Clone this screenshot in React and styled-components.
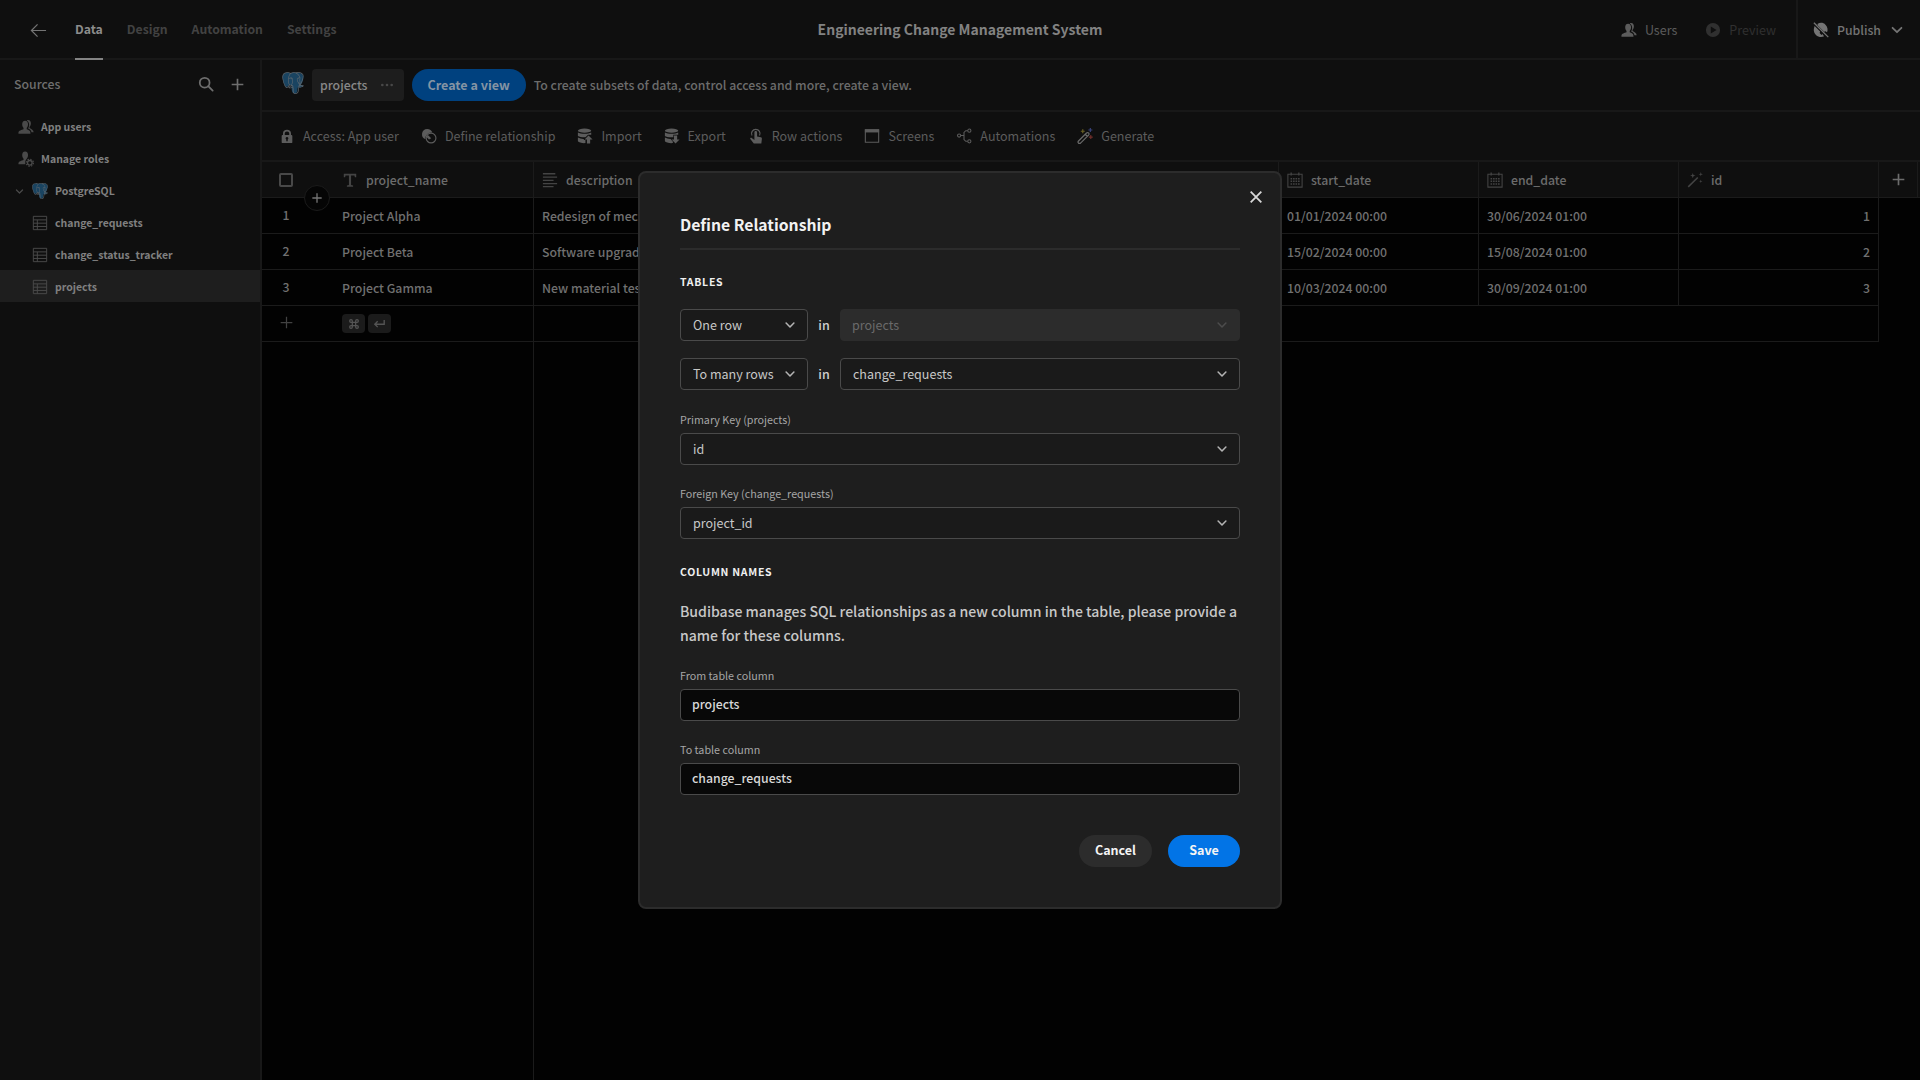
import React from "react";
import styled, { createGlobalStyle, css } from "styled-components";
import { SiPostgresql } from "react-icons/si";

const GlobalStyle = createGlobalStyle`
  * {
    box-sizing: border-box;
  }

  body {
    margin: 0;
    background: #020202;
    color: #747474;
    font-family: "Source Sans Pro", "Noto Sans CJK SC", sans-serif;
    font-size: 14px;
    font-size-adjust: 0.486;
    line-height: 20px;
  }

  button, input, select {
    margin: 0;
    font: inherit;
    font-size-adjust: inherit;
    color: inherit;
  }

  button {
    padding: 0;
    border: 0;
    background: none;
    cursor: pointer;
  }
`;

const medium = css`
  font-weight: 500;
  font-size-adjust: 0.477;
`;

const bold = css`
  font-weight: 600;
  font-size-adjust: 0.475;
`;

const navItems = ["Data", "Design", "Automation", "Settings"];

const columns = [
  { name: "description", icon: "text", width: 745 },
  { name: "start_date", icon: "calendar", width: 200 },
  { name: "end_date", icon: "calendar", width: 200 },
  { name: "id", icon: "wand", width: 200 }
];

const rows = [
  { id: 1, name: "Project Alpha", description: "Redesign of mech", start: "01/01/2024 00:00", end: "30/06/2024 01:00" },
  { id: 2, name: "Project Beta", description: "Software upgrade", start: "15/02/2024 00:00", end: "15/08/2024 01:00" },
  { id: 3, name: "Project Gamma", description: "New material test", start: "10/03/2024 00:00", end: "30/09/2024 01:00" }
];

const actions = [
  { label: "Access: App user", icon: "lock" },
  { label: "Define relationship", icon: "relation" },
  { label: "Import", icon: "import" },
  { label: "Export", icon: "export" },
  { label: "Row actions", icon: "touch" },
  { label: "Screens", icon: "screen" },
  { label: "Automations", icon: "branch" },
  { label: "Generate", icon: "magic" }
];

// all glyphs share an 18 x 18 grid
const glyphs = {
  back: <path d="M17 9H2M8 2.500L1.500 9L8 15.500" fill="none" stroke="currentColor" strokeWidth="1.300" />,
  search: (
    <g fill="none" stroke="currentColor" strokeWidth="2">
      <circle cx="7.500" cy="7.500" r="5.500" />
      <path d="M11.500 11.500L16.500 16.500" strokeLinecap="round" />
    </g>
  ),
  plus: <path d="M9 2V16M2 9H16" fill="none" stroke="currentColor" strokeWidth="2" />,
  thinPlus: <path d="M9 2V16M2 9H16" fill="none" stroke="currentColor" strokeWidth="1.500" />,
  chevron: <path d="M4 6.500L9 11.500L14 6.500" fill="none" stroke="currentColor" strokeWidth="2" strokeLinecap="round" strokeLinejoin="round" />,
  close: <path d="M3 3L15 15M15 3L3 15" fill="none" stroke="currentColor" strokeWidth="2" />,
  users: (
    <g fill="currentColor">
      <path d="M8 2C10.300 2 11.300 3.700 11.300 6C11.300 7.900 10.500 9.400 9.800 10.200V11.500C11.700 12.300 14 12.800 14 15.500V16.500H0.500V15.500C0.500 12.800 4.300 12.300 6.200 11.500V10.200C5.500 9.400 4.700 7.900 4.700 6C4.700 3.700 5.700 2 8 2Z" />
      <path d="M9.800 1.500C12.700 0.300 14.500 2 14.500 4.800C14.500 6.700 13.700 8 13 8.800V10C15 10.800 17.600 12.500 17.600 14.800H15.200C14.700 12.200 13.200 11.400 11.400 10.700C12.900 8.500 13.400 4 9.800 1.500Z" />
    </g>
  ),
  roles: (
    <g fill="currentColor">
      <path d="M8 0.500C10.300 0.500 11.300 2.200 11.300 4.500C11.300 6.400 10.500 7.900 9.800 8.700C8.200 10.300 7.700 12.800 8.400 15H0.500V14C0.500 11.300 4.300 10.800 6.200 10V8.700C5.500 7.900 4.700 6.400 4.700 4.500C4.700 2.200 5.700 0.500 8 0.500Z" />
      <circle cx="13.300" cy="13.300" r="2.600" fill="none" stroke="currentColor" strokeWidth="1.500" />
      <circle cx="13.300" cy="13.300" r="4" fill="none" stroke="currentColor" strokeWidth="1.400" strokeDasharray="1.570 1.570" />
    </g>
  ),
  table: (
    <path d="M1.500 1.500H16.500V16.500H1.500ZM1.500 5.500H16.500M1.500 9.200H16.500M1.500 12.900H16.500M6 5.500V16.500" fill="none" stroke="currentColor" strokeWidth="1.100" />
  ),
  more: (
    <g fill="currentColor">
      <circle cx="3" cy="9" r="1.700" />
      <circle cx="9" cy="9" r="1.700" />
      <circle cx="15" cy="9" r="1.700" />
    </g>
  ),
  lock: (
    <path fillRule="evenodd" d="M4 8H4.500V6C4.500 3.500 6.200 2 9 2S13.500 3.500 13.500 6V8H14C14.600 8 15 8.400 15 9V16C15 16.600 14.600 17 14 17H4C3.400 17 3 16.600 3 16V9C3 8.400 3.400 8 4 8ZM6.500 8H11.500V6C11.500 4.600 10.500 3.800 9 3.800S6.500 4.600 6.500 6ZM8.200 12.900V15H9.800V12.900C11.200 12 10.500 10.200 9 10.200S6.800 12 8.200 12.900Z" fill="currentColor" />
  ),
  relation: (
    <g>
      <path d="M7 1A6 6 0 0 0 5 12.600A6.600 6.600 0 0 1 12.700 5.200A6 6 0 0 0 7 1Z" fill="currentColor" />
      <circle cx="11.300" cy="11.300" r="5.500" fill="none" stroke="currentColor" strokeWidth="1.300" />
      <path d="M7.500 7.500L11.500 11.500L9 13L6.500 10.500Z" fill="currentColor" />
    </g>
  ),
  import: (
    <g fill="currentColor">
      <ellipse cx="8.500" cy="3" rx="7.500" ry="2.300" />
      <path d="M1 5C4 7 13 7 16 5V7.500L12.500 7.700L9.500 10.500C6 10.700 2.500 10 1 9Z" />
      <path d="M1 10.800C3 12 5.500 12.400 7.700 12.300V13.500H9.500V17C6 17.300 2 16.500 1 15Z" />
      <path d="M13 8.500L17.500 13H14.800V17.500H11.200V13H8.500Z" />
    </g>
  ),
  export: (
    <g fill="currentColor">
      <ellipse cx="8.500" cy="3" rx="7.500" ry="2.300" />
      <path d="M1 5C4 7 13 7 16 5V7.500H10.500V10.300C6 10.700 2.500 10 1 9Z" />
      <path d="M1 10.800C3 12 5 12.400 7.500 12.300L10 15.500V17C6 17.300 2 16.500 1 15Z" />
      <path d="M13 17.500L17.500 13H14.800V8.500H11.200V13H8.500Z" />
    </g>
  ),
  touch: (
    <g>
      <path d="M4.500 8.500A4.800 4.800 0 1 1 13 8.500" fill="none" stroke="currentColor" strokeWidth="1.300" />
      <path d="M7.200 5C7.200 2.800 10.200 2.800 10.200 5V9.500L14.500 10.500C15.400 10.800 15.700 11.400 15.600 12.300L15 17.500H6.500L2.600 12.500C2 11.300 3.500 10.500 4.500 11.500L7.200 13.500Z" fill="currentColor" />
    </g>
  ),
  screen: (
    <g>
      <path d="M1.500 2H16.500V16H1.500Z" fill="none" stroke="currentColor" strokeWidth="1.200" />
      <path d="M1 1.500H17V5H1Z" fill="currentColor" />
    </g>
  ),
  branch: (
    <g fill="none" stroke="currentColor" strokeWidth="1.200">
      <circle cx="3.500" cy="8.500" r="1.800" />
      <circle cx="15" cy="3" r="1.800" />
      <circle cx="15" cy="15" r="1.800" />
      <path d="M5.500 8.500H9M13 3H11L9 5V13L11 15H13" />
    </g>
  ),
  magic: (
    <g>
      <path d="M1.700 14.600L10.700 5.600Q12 4.600 13.100 5.600Q14 6.700 13 8L4 17Q2.700 17.800 1.600 16.800Q0.700 15.700 1.700 14.600ZM9.300 7L11.600 9.300" fill="none" stroke="#6a6a6a" strokeWidth="1.400" />
      <path d="M6.500 1.500V6M4.300 3.700H8.700" stroke="#6b6125" strokeWidth="1.300" />
      <path d="M15 0V4.500M12.800 2.200H17.300" stroke="#39437c" strokeWidth="1.300" />
      <path d="M15.500 8V12.500M13.300 10.200H17.700" stroke="#722f2b" strokeWidth="1.300" />
    </g>
  ),
  wand: (
    <g fill="currentColor">
      <path d="M11.500 5.500L12.700 6.700L2 17.300L0.800 16.100Z" />
      <path d="M6.500 1L7.300 3.300L9.500 4L7.300 4.800L6.500 7L5.700 4.800L3.500 4L5.700 3.300Z" />
      <path d="M15.500 0L16 2L18 2.500L16 3L15.500 5L15 3L13 2.500L15 2Z" />
      <path d="M15.500 8.500L16 10L17.500 10.500L16 11L15.500 12.500L15 11L13.500 10.500L15 10Z" />
    </g>
  ),
  type: <path d="M2 2H16V6H14.500L14 4H10.200V14.700L12.500 15.200V16.500H5.500V15.200L7.800 14.700V4H4L3.500 6H2Z" fill="currentColor" />,
  text: <path d="M1 2H15M1 5.700H17M1 9.400H13M1 13.100H17M1 16.500H13" fill="none" stroke="currentColor" strokeWidth="1.500" />,
  calendar: (
    <g fill="none" stroke="currentColor">
      <path d="M1 2.500H17V17H1Z" strokeWidth="1.200" />
      <path d="M4.700 0.500V4M13.300 0.500V4" strokeWidth="1.500" />
      <path d="M4 7.500H14.500M4 10.500H14.500M4 13.500H14.500" strokeWidth="1.600" strokeDasharray="1.800 1" />
    </g>
  ),
  play: <path fillRule="evenodd" d="M9 1A8 8 0 1 0 9 17A8 8 0 1 0 9 1ZM6.500 5L13 9L6.500 13Z" fill="currentColor" />,
  globeOff: (
    <g>
      <path d="M5 2.200C8 0.200 12 0.800 14 3C16.500 5.500 17 9 15.800 11.500L14 10.500L12.500 11L5.500 4Z" fill="currentColor" />
      <path d="M1.800 4.500C0.300 8 0.500 12 3.300 14.500C6 17 9.500 17.500 12.500 16L10.500 13.500L9.500 14.500L7.500 12.500L8 10.800Z" fill="currentColor" />
      <path d="M1 0.800L17.200 17" stroke="currentColor" strokeWidth="1.500" />
    </g>
  ),
  command: (
    <path d="M6.500 6.500H11.500V11.500H6.500ZM6.500 6.500V4.500A2 2 0 1 0 4.500 6.500ZM11.500 6.500H13.500A2 2 0 1 0 11.500 4.500ZM11.500 11.500V13.500A2 2 0 1 0 13.500 11.500ZM6.500 11.500H4.500A2 2 0 1 0 6.500 13.500Z" fill="none" stroke="currentColor" strokeWidth="1.900" />
  ),
  enter: <path d="M15.500 4V10H3M6.500 6L2.500 10L6.500 14" fill="none" stroke="currentColor" strokeWidth="1.900" />
};

function Icon({ name, size = 16 }) {
  return (
    <Svg viewBox="0 0 18 18" width={size} height={size} aria-hidden="true">
      {glyphs[name]}
    </Svg>
  );
}

// blue body under the package's line drawing
function PostgresLogo({ size }) {
  return (
    <Elephant viewBox="0 0 24 24" width={size} height={size} aria-hidden="true">
      <path
        d="M7.500 0.800C3 0.200 0.500 2.500 0.700 6C1 10 2.800 15.500 4.800 16.200C5.800 16.600 7.500 15 8.500 14L10.500 15.300C10.300 18 10.500 20.500 11.500 22.300C12.500 23.800 15.500 23.600 16.500 21.500C17 20 16.800 18 17.200 16.800C19.500 17.200 22.500 16.200 23.200 14.600L20.500 14.300C22.500 11.500 23.800 7 23.200 4.500C22 1 17.500 0.200 15 1.200C12.500 0.400 10.500 0.600 9.500 1.300Z"
        fill="currentColor"
      />
      <SiPostgresql size={24} />
    </Elephant>
  );
}

function Select({ id, label, value, disabled, small }) {
  return (
    <SelectWrapper $small={small} $disabled={disabled}>
      <SelectBox id={id} aria-label={label} defaultValue={value} disabled={disabled}>
        <option>{value}</option>
      </SelectBox>
      <Icon name="chevron" size={14} />
    </SelectWrapper>
  );
}

function TopBar() {
  return (
    <Header>
      <Nav>
        <IconButton aria-label="Back"><Icon name="back" size={17} /></IconButton>
        <Tabs>
          {navItems.map((item, i) => (
            <Tab key={item} href="#" $active={i === 0}>{item}</Tab>
          ))}
        </Tabs>
      </Nav>
      <AppTitle>Engineering Change Management System</AppTitle>
      <HeaderRight>
        <HeaderButton><Icon name="users" />Users</HeaderButton>
        <HeaderButton $dim><Icon name="play" size={16} />Preview</HeaderButton>
        <Publish><Icon name="globeOff" />Publish<Icon name="chevron" size={16} /></Publish>
      </HeaderRight>
    </Header>
  );
}

function Sources() {
  return (
    <Sidebar>
      <SidebarHeader>
        <span>Sources</span>
        <SidebarTools>
          <IconButton aria-label="Search"><Icon name="search" /></IconButton>
          <IconButton aria-label="Add source"><Icon name="plus" size={15} /></IconButton>
        </SidebarTools>
      </SidebarHeader>
      <SourceItem href="#" $indent={18}><Icon name="users" />App users</SourceItem>
      <SourceItem href="#" $indent={18}><Icon name="roles" />Manage roles</SourceItem>
      <SourceItem href="#" $indent={14}><Icon name="chevron" size={11} /><PostgresLogo size={16} />PostgreSQL</SourceItem>
      <SourceItem href="#" $indent={32}><Icon name="table" />change_requests</SourceItem>
      <SourceItem href="#" $indent={32}><Icon name="table" />change_status_tracker</SourceItem>
      <SourceItem href="#" $indent={32} $selected><Icon name="table" />projects</SourceItem>
    </Sidebar>
  );
}

function Grid() {
  return (
    <GridArea>
      <Table>
        <colgroup>
          <Col $width={72} />
          <Col $width={200} />
          {columns.map((col) => <Col key={col.name} $width={col.width} />)}
          <Col $width={39} />
          <col />
        </colgroup>
        <thead>
          <tr>
            <HeadCell $gutter $plain>
              <Checkbox type="checkbox" aria-label="Select all rows" />
              <AddRow aria-label="Insert row"><Icon name="plus" size={12} /></AddRow>
            </HeadCell>
            <HeadCell><HeadLabel><Icon name="type" />project_name</HeadLabel></HeadCell>
            {columns.map((col) => (
              <HeadCell key={col.name}><HeadLabel><Icon name={col.icon} />{col.name}</HeadLabel></HeadCell>
            ))}
            <HeadCell $gutter>
              <IconButton aria-label="Add column"><Icon name="plus" size={15} /></IconButton>
            </HeadCell>
            <HeadCell $plain />
          </tr>
        </thead>
        <tbody>
          {rows.map((row) => (
            <tr key={row.id}>
              <Cell $gutter $plain>{row.id}</Cell>
              <Cell>{row.name}</Cell>
              <Cell>{row.description}</Cell>
              <Cell>{row.start}</Cell>
              <Cell>{row.end}</Cell>
              <Cell $right>{row.id}</Cell>
            </tr>
          ))}
          <tr>
            <Cell $gutter $plain $dim><IconButton aria-label="New row"><Icon name="thinPlus" size={15} /></IconButton></Cell>
            <Cell>
              <Keys>
                <Key><Icon name="command" size={12} /></Key>
                <Key><Icon name="enter" size={13} /></Key>
              </Keys>
            </Cell>
            <Cell colSpan={4} />
          </tr>
        </tbody>
      </Table>
      <StickyEdge />
    </GridArea>
  );
}

function RelationshipModal() {
  return (
    <Overlay>
      <Modal role="dialog" aria-label="Define Relationship">
        <CloseButton aria-label="Close"><Icon name="close" size={16} /></CloseButton>
        <ModalTitle>Define Relationship</ModalTitle>
        <SectionTitle>Tables</SectionTitle>
        <TableRows>
          <TableRow>
            <Select label="From rows" value="One row" small />
            <span>in</span>
            <Select label="From table" value="projects" disabled />
          </TableRow>
          <TableRow>
            <Select label="To rows" value="To many rows" small />
            <span>in</span>
            <Select label="To table" value="change_requests" />
          </TableRow>
        </TableRows>
        <Field>
          <Label htmlFor="primary">Primary Key (projects)</Label>
          <Select id="primary" value="id" />
        </Field>
        <Field>
          <Label htmlFor="foreign">Foreign Key (change_requests)</Label>
          <Select id="foreign" value="project_id" />
        </Field>
        <SectionTitle>Column names</SectionTitle>
        <Text>
          Budibase manages SQL relationships as a new column in the table, please provide a name for these columns.
        </Text>
        <Field>
          <Label htmlFor="from">From table column</Label>
          <Input id="from" defaultValue="projects" />
        </Field>
        <Field>
          <Label htmlFor="to">To table column</Label>
          <Input id="to" defaultValue="change_requests" />
        </Field>
        <Buttons>
          <Button>Cancel</Button>
          <Button $cta>Save</Button>
        </Buttons>
      </Modal>
    </Overlay>
  );
}

export default function App() {
  return (
    <>
      <GlobalStyle />
      <Page>
        <TopBar />
        <Main>
          <Sources />
          <Content>
            <ViewBar>
              <PostgresLogo size={22} />
              <ViewTab>projects<Icon name="more" size={14} /></ViewTab>
              <CreateView>Create a view</CreateView>
              <span>To create subsets of data, control access and more, create a view.</span>
            </ViewBar>
            <Toolbar>
              {actions.map((action) => (
                <Action key={action.label}><Icon name={action.icon} />{action.label}</Action>
              ))}
            </Toolbar>
            <Grid />
          </Content>
        </Main>
      </Page>
      <RelationshipModal />
    </>
  );
}

const Svg = styled.svg`
  display: block;
  flex: none;
`;

const Elephant = styled.svg`
  display: block;
  flex: none;

  && {
    color: #1a4461;
  }

  svg {
    color: #5c666e;
  }
`;

const Page = styled.div`
  height: 100vh;
  display: flex;
  flex-direction: column;
  overflow: hidden;
`;

const Header = styled.header`
  height: 60px;
  flex: none;
  display: grid;
  grid-template-columns: 1fr auto 1fr;
  background: #0f0f0f;
  border-bottom: 2px solid #181818;
`;

const Nav = styled.nav`
  display: flex;
  align-items: center;
  gap: 28px;
  padding-left: 30px;
  color: #747474;
`;

const Tabs = styled.div`
  display: flex;
  align-self: flex-start;
  gap: 24px;
  height: 60px;
`;

const Tab = styled.a`
  display: flex;
  align-items: center;
  ${bold}
  text-decoration: none;
  color: ${(props) => (props.$active ? "#8c8c8c" : "#424242")};
  border-bottom: 2px solid ${(props) => (props.$active ? "#848484" : "transparent")};
`;

const AppTitle = styled.h1`
  margin: 0;
  padding-top: 17px;
  font-size: 16px;
  ${bold}
  line-height: 24px;
  color: #828282;
`;

const HeaderRight = styled.div`
  display: flex;
  justify-content: flex-end;
`;

const HeaderButton = styled.button`
  display: flex;
  align-items: center;
  gap: 8px;
  margin-right: ${(props) => (props.$dim ? 20 : 28)}px;
  color: ${(props) => (props.$dim ? "#303030" : "#5c5c5c")};
`;

const Publish = styled.button`
  display: flex;
  align-items: center;
  gap: 8px;
  padding: 0 15px;
  border-left: 2px solid #181818;
  ${medium}
  color: #747474;
`;

const IconButton = styled.button`
  display: flex;
  align-items: center;
  justify-content: center;
`;

const Main = styled.div`
  flex: 1;
  min-height: 0;
  display: flex;
`;

const Sidebar = styled.aside`
  width: 262px;
  flex: none;
  background: #0f0f0f;
  border-right: 2px solid #181818;
`;

const SidebarHeader = styled.div`
  display: flex;
  justify-content: space-between;
  height: 50px;
  padding: 14px 15px 16px 14px;
  ${medium}
  color: #6e6e6e;
`;

const SidebarTools = styled.div`
  display: flex;
  gap: 16px;
`;

const SourceItem = styled.a`
  display: flex;
  align-items: center;
  gap: 7px;
  height: 32px;
  padding: 2px 0 0 ${(props) => props.$indent}px;
  font-size: 12px;
  ${bold}
  text-decoration: none;
  color: #808080;
  background: ${(props) => (props.$selected ? "#1e1e1e" : "transparent")};

  > svg {
    color: #4a4a4a;
  }
`;

const Content = styled.main`
  flex: 1;
  min-width: 0;
  display: flex;
  flex-direction: column;
`;

const ViewBar = styled.div`
  display: flex;
  align-items: center;
  gap: 8px;
  height: 52px;
  flex: none;
  padding-left: 20px;
  ${medium}
  color: #6c6c6c;
  background: #0f0f0f;
  border-bottom: 2px solid #181818;

  > ${Elephant} {
    margin-bottom: 4px;
  }
`;

const ViewTab = styled.button`
  display: flex;
  align-items: center;
  gap: 12px;
  height: 32px;
  padding: 0 10px 0 8px;
  border-radius: 4px;
  color: #888888;
  background: #1d1d1d;

  svg {
    color: #484848;
  }
`;

const CreateView = styled.button`
  height: 32px;
  padding: 0 16px;
  border-radius: 16px;
  font-weight: 600;
  font-size-adjust: 0.486;
  color: #8494a4;
  background: #00417f;
`;

const Toolbar = styled.div`
  display: flex;
  align-items: center;
  gap: 22px;
  height: 50px;
  flex: none;
  padding-left: 17px;
  background: #0f0f0f;
  border-bottom: 2px solid #181818;
`;

const Action = styled.button`
  display: flex;
  align-items: center;
  gap: 8px;
  color: #5c5c5c;
`;

const GridArea = styled.div`
  flex: 1;
  display: flex;
  flex-direction: column;
`;

const Table = styled.table`
  width: 100%;
  table-layout: fixed;
  border-collapse: separate;
  border-spacing: 0;
`;

const Col = styled.col`
  width: ${(props) => props.$width}px;
`;

const Cell = styled.td`
  height: 36px;
  padding: 0 8px;
  text-align: ${(props) => (props.$right ? "right" : "left")};
  white-space: nowrap;
  overflow: hidden;
  ${medium}
  color: ${(props) => (props.$dim ? "#424242" : "#707070")};
  border-right: ${(props) => (props.$plain ? 0 : 1)}px solid #1b1b1b;
  border-bottom: 1px solid #1b1b1b;
  ${(props) => props.$gutter && `
    padding: 0 24px 2px 0;
    text-align: center;

    button {
      width: 100%;
    }
  `}
`;

const HeadCell = styled.th`
  position: relative;
  height: 36px;
  padding: ${(props) => (props.$gutter ? "0" : "0 8px")};
  text-align: left;
  ${medium}
  color: #6c6c6c;
  background: #0f0f0f;
  border-right: ${(props) => (props.$plain ? 0 : 1)}px solid #1b1b1b;
  border-bottom: 1px solid #1b1b1b;

  > ${IconButton} {
    width: 100%;
  }
`;

const HeadLabel = styled.div`
  display: flex;
  align-items: center;
  gap: 8px;

  svg {
    color: #444444;
  }
`;

const Checkbox = styled.input`
  appearance: none;
  display: block;
  width: 14px;
  height: 14px;
  margin-left: 17px;
  border: 2px solid #484848;
  border-radius: 2px;
`;

const AddRow = styled.button`
  position: absolute;
  left: 42px;
  bottom: -14px;
  z-index: 1;
  width: 26px;
  height: 26px;
  display: flex;
  align-items: center;
  justify-content: center;
  border: 1px solid #1b1b1b;
  border-radius: 50%;
  color: #747474;
  background: #050505;
`;

const Keys = styled.div`
  display: flex;
  gap: 3px;
`;

const Key = styled.kbd`
  display: flex;
  align-items: center;
  justify-content: center;
  width: 23px;
  height: 19px;
  border-radius: 4px;
  color: #545454;
  background: #1b1b1b;
`;

const StickyEdge = styled.div`
  flex: 1;
  width: 272px;
  border-right: 1px solid #1b1b1b;
`;

const Overlay = styled.div`
  position: fixed;
  inset: 0;
  z-index: 10;
  display: flex;
  align-items: center;
  justify-content: center;
`;

const Modal = styled.div`
  position: relative;
  width: 644px;
  padding: 40px;
  border: 2px solid #2c2c2c;
  border-radius: 8px;
  color: #d0d0d0;
  background: #1e1e1e;
`;

const CloseButton = styled.button`
  position: absolute;
  top: 16px;
  right: 16px;
  color: #d8d8d8;
`;

const ModalTitle = styled.h2`
  margin: 0 0 24px;
  padding-bottom: 12px;
  font-size: 18px;
  ${bold}
  line-height: 23px;
  color: #f2f2f2;
  border-bottom: 2px solid #2c2c2c;
`;

const TableRows = styled.div`
  display: flex;
  flex-direction: column;
  gap: 17px;
  padding-bottom: 1px;
`;

const TableRow = styled.div`
  display: flex;
  align-items: center;
  justify-content: space-between;
  font-weight: 500;
`;

const SelectWrapper = styled.div`
  position: relative;
  flex: none;
  width: ${(props) => (props.$small ? "128px" : "400px")};
  font-weight: 400;
  color: ${(props) => (props.$disabled ? "#6a6a6a" : "#c8c8c8")};

  svg {
    position: absolute;
    top: 9px;
    right: 11px;
    pointer-events: none;
    color: ${(props) => (props.$disabled ? "#4c4c4c" : "#b4b4b4")};
  }
`;

const SelectBox = styled.select`
  appearance: none;
  display: block;
  width: 100%;
  height: 32px;
  padding: 0 12px;
  border: 1px solid #4a4a4a;
  border-radius: 4px;
  background: #1a1a1a;

  &:disabled {
    padding: 0 11px;
    opacity: 1;
    border-color: #2c2c2c;
    background: #2c2c2c;
  }
`;

const Field = styled.div`
  display: flex;
  flex-direction: column;
  gap: 5px;
  margin-top: 21px;

  ${SelectWrapper} {
    width: 100%;
  }
`;

const SectionTitle = styled.h3`
  margin: 24px 0 19px;
  font-size: 12px;
  ${bold}
  line-height: 16px;
  letter-spacing: 0.06em;
  text-transform: uppercase;
  color: #f0f0f0;

  ${Field} + & {
    margin-top: 25px;
  }
`;

const Label = styled.label`
  font-size: 12px;
  line-height: 16px;
  color: #a6a6a6;
`;

const Text = styled.p`
  margin: 0;
  font-size: 16px;
  ${medium}
  line-height: 24px;
  color: #c8c8c8;
`;

const Input = styled.input`
  height: 32px;
  padding: 0 11px 2px;
  border: 1px solid #4a4a4a;
  border-radius: 4px;
  background: #080808;

  && {
    ${medium}
    color: #d8d8d8;
  }
`;

const Buttons = styled.div`
  display: flex;
  justify-content: flex-end;
  gap: 16px;
  margin-top: 40px;
`;

const Button = styled.button`
  min-width: 72px;
  height: 32px;
  padding: 0 16px 2px;
  border-radius: 16px;
  font-weight: 600;
  color: #f4f4f4;
  background: ${(props) => (props.$cta ? "#0274e6" : "#2c2c2c")};
`;
